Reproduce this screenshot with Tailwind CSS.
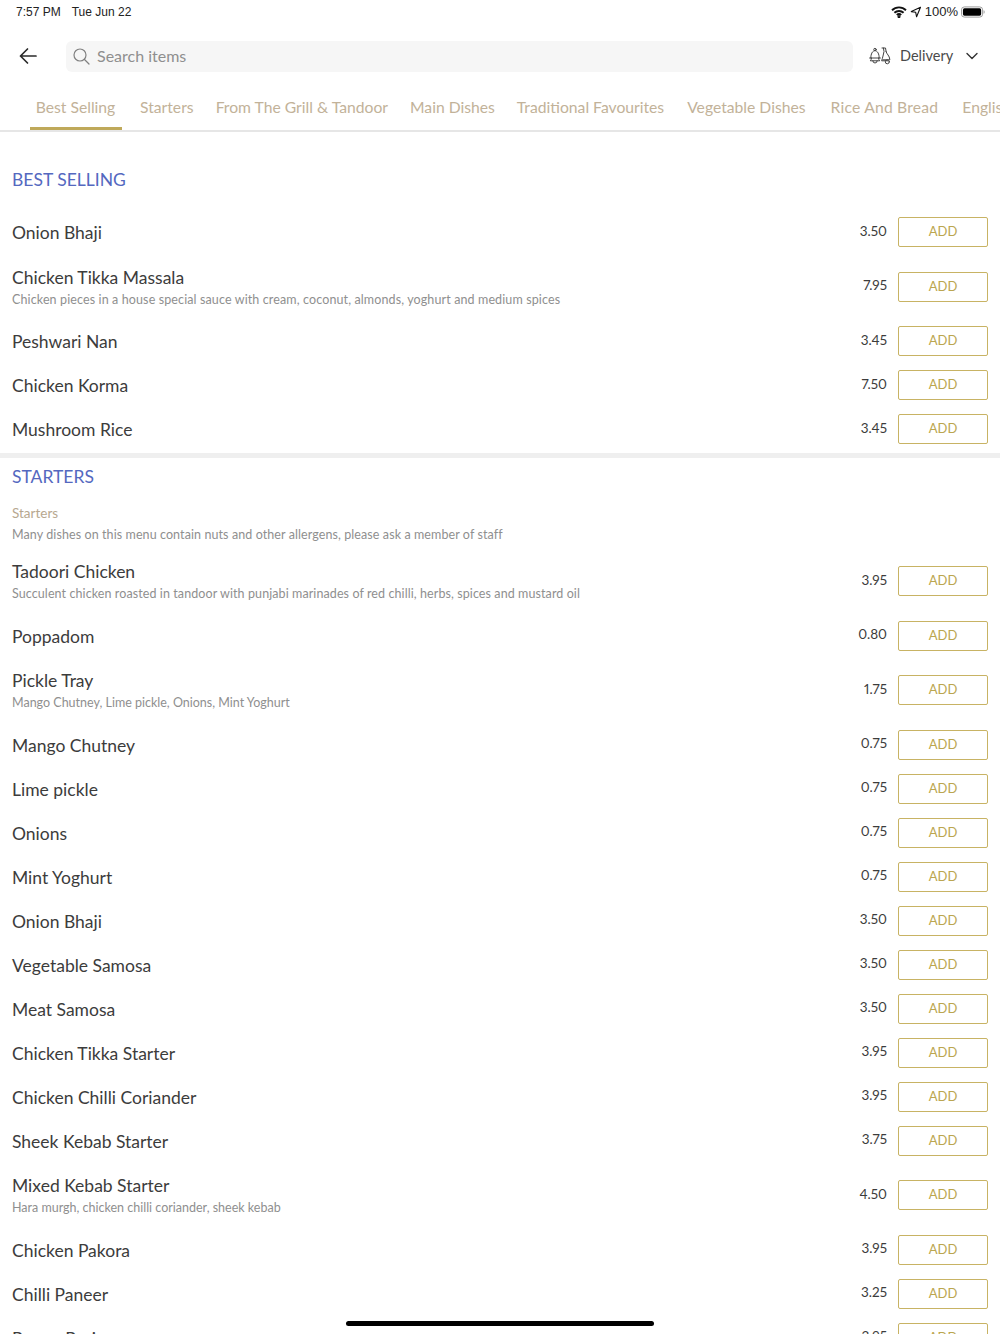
<!DOCTYPE html>
<html lang="en">
<head>
<meta charset="UTF-8" />
<meta name="viewport" content="width=device-width, initial-scale=1" />
<title>Menu</title>
<script src="https://cdn.jsdelivr.net/npm/@tailwindcss/browser@4"></script>
</head>
<body class="relative h-[1334px] overflow-hidden bg-white font-['Lato',sans-serif] text-[#3c3c3c]">

<!-- status bar -->
<div class="flex h-6 items-center justify-between pl-4 pr-[15px] font-['Liberation_Sans',sans-serif] text-[12px] text-[#222]">
  <div class="flex gap-[11px]"><span>7:57 PM</span><span>Tue Jun 22</span></div>
  <div class="flex items-center gap-[3px]">
    <svg class="h-3 w-4" viewBox="0 0 16 12" fill="none" stroke="#111" stroke-width="1.9"><path d="M1 4.200a10 10 0 0 1 14 0M3.400 6.800a6.600 6.600 0 0 1 9.200 0M5.800 9a3.200 3.200 0 0 1 4.400 0"/><circle cx="8" cy="10.600" r=".6" fill="#111"/></svg>
    <svg class="h-3 w-3" viewBox="0 0 12 12" fill="none" stroke="#111" stroke-width="1.100" stroke-linejoin="round"><path d="M10.500 1.200 1.300 5.600l4.400.7.900 4.500z"/></svg>
    <span class="text-[13px]">100%</span>
    <svg class="h-3 w-6" viewBox="0 0 25 12"><rect x=".5" y=".7" width="22" height="10.600" rx="3" fill="none" stroke="#999"/><rect x="2" y="2.200" width="19" height="7.600" rx="1.600" fill="#000"/><path d="M23.600 4.200c.8.300 1 1 1 1.800s-.2 1.500-1 1.800z" fill="#999"/></svg>
  </div>
</div>

<!-- search row -->
<div class="flex h-[64px] items-center">
  <div class="flex w-[66px] shrink-0 justify-center pr-[11px] pl-[1px]">
    <svg class="h-[18px] w-[18px]" viewBox="0 0 18 18" fill="none" stroke="#2b2b2b" stroke-width="1.700" stroke-linecap="round" stroke-linejoin="round"><path d="M17 9H1.500M8.500 2 1.500 9l7 7"/></svg>
  </div>
  <div class="flex h-[31px] w-[787px] items-center gap-[7px] rounded-md bg-[#f6f6f6] pl-[7px]">
    <svg class="h-[17px] w-[17px]" viewBox="0 0 17 17" fill="none" stroke="#808080" stroke-width="1.200" stroke-linecap="round"><circle cx="7" cy="7" r="6"/><path d="m11.500 11.500 4.500 4.500"/></svg>
    <span class="text-[16px] text-[#8f8f8f]">Search items</span>
  </div>
  <div class="ml-4 flex items-center">
    <svg class="h-[18px] w-[22px]" viewBox="0 0 22 18" fill="none" stroke="#444" stroke-width="1" stroke-linecap="round" stroke-linejoin="round"><circle cx="6" cy="2.500" r="1.200"/><path d="M1.800 11C1.800 6.800 3.500 3.700 6 3.700s4.200 3.100 4.200 7.300"/><path d="M.6 11h10.800"/><path d="M2.500 11c0 .9-.4 2-1.200 2.800h9.400c-.8-.8-1.200-1.900-1.200-2.800"/><path d="M3.800 13.800a2.200 2.200 0 0 0 4.400 0"/><path d="M13 1h3.500l.6 3.500M14.400 1l.6 3.500-1 4.500c-.5 2 -.9 3.500-1.400 4.800h6"/><path d="M17 4.500c.6 2.800 3.500 3.800 3.900 8.300h-7"/><circle cx="18.300" cy="14.800" r="2"/></svg>
    <span class="ml-[9px] text-[14.5px] text-[#4a4a4a]">Delivery</span>
    <svg class="ml-[13px] h-[8px] w-[12px]" viewBox="0 0 12 8" fill="none" stroke="#333" stroke-width="1.400" stroke-linecap="round" stroke-linejoin="round"><path d="m1 1.500 5 5 5-5"/></svg>
  </div>
</div>

<!-- category tabs -->
<div class="flex h-[44px] items-stretch overflow-hidden border-b-2 border-[#e6e6e6] pl-[30px] whitespace-nowrap text-[15.7px] text-[#c2b299]">
  <div class="flex w-[92px] shrink-0 items-center justify-center border-b-[3px] border-[#bfa95a] pr-[1px]">Best Selling</div>
  <div class="flex items-center pb-[2px] pl-[18px]">Starters</div>
  <div class="flex items-center pb-[2px] pl-[22px]">From The Grill &amp; Tandoor</div>
  <div class="flex items-center pb-[2px] pl-[22px]">Main Dishes</div>
  <div class="flex items-center pb-[2px] pl-[22px]">Traditional Favourites</div>
  <div class="flex items-center pb-[2px] pl-[23px]">Vegetable Dishes</div>
  <div class="flex items-center pb-[2px] pl-[25px] tracking-[0.2px]">Rice And Bread</div>
  <div class="flex items-center pb-[2px] pl-[24px]">English Dishes</div>
</div>

<!-- best selling -->
<h2 class="flex h-[78px] items-end pb-[22px] pl-3 text-[17.5px] leading-none text-[#5468bf]">BEST SELLING</h2>
<div class="pl-3 pr-3">
  <div class="flex h-[44px] items-center"><p class="flex-1 pt-[3px] text-[17.5px]">Onion Bhaji</p><span class="-mt-[2px] w-[60px] pr-[1px] text-right text-[13.5px] proportional-nums">3.50</span><button class="ml-[10px] h-[30px] w-[90px] rounded-[2px] border border-[#c8b364] text-[13px] text-[#bba650]">ADD</button></div>
  <div class="flex h-[65px] items-center"><div class="flex-1 pt-[2px]"><p class="text-[17.5px] leading-[24px]">Chicken Tikka Massala</p><p class="text-[12.5px] leading-[20px] tracking-[0.12px] text-[#8f8f8f]">Chicken pieces in a house special sauce with cream, coconut, almonds, yoghurt and medium spices</p></div><span class="-mt-[2px] w-[60px] pr-[1px] text-right text-[13.5px] proportional-nums">7.95</span><button class="ml-[10px] h-[30px] w-[90px] rounded-[2px] border border-[#c8b364] text-[13px] text-[#bba650]">ADD</button></div>
  <div class="flex h-[44px] items-center"><p class="flex-1 pt-[3px] text-[17.5px]">Peshwari Nan</p><span class="-mt-[2px] w-[60px] pr-[1px] text-right text-[13.5px] proportional-nums">3.45</span><button class="ml-[10px] h-[30px] w-[90px] rounded-[2px] border border-[#c8b364] text-[13px] text-[#bba650]">ADD</button></div>
  <div class="flex h-[44px] items-center"><p class="flex-1 pt-[3px] text-[17.5px]">Chicken Korma</p><span class="-mt-[2px] w-[60px] pr-[1px] text-right text-[13.5px] proportional-nums">7.50</span><button class="ml-[10px] h-[30px] w-[90px] rounded-[2px] border border-[#c8b364] text-[13px] text-[#bba650]">ADD</button></div>
  <div class="flex h-[44px] items-center"><p class="flex-1 pt-[3px] text-[17.5px]">Mushroom Rice</p><span class="-mt-[2px] w-[60px] pr-[1px] text-right text-[13.5px] proportional-nums">3.45</span><button class="ml-[10px] h-[30px] w-[90px] rounded-[2px] border border-[#c8b364] text-[13px] text-[#bba650]">ADD</button></div>
</div>

<div class="mt-[2px] h-[5px] bg-[#efefef]"></div>

<!-- starters -->
<h2 class="flex h-[38px] items-center pl-3 text-[17.5px] leading-none text-[#5468bf]">STARTERS</h2>
<div class="pl-3 pr-3">
  <div class="flex h-[52.5px] flex-col justify-center pt-1 text-[13.5px] leading-[21px]"><p class="text-[#b7a88f]">Starters</p><p class="text-[12.5px] tracking-[0.09px] text-[#8f8f8f]">Many dishes on this menu contain nuts and other allergens, please ask a member of staff</p></div>
  <div class="flex h-[65px] items-center"><div class="flex-1 pt-[2px]"><p class="text-[17.5px] leading-[24px]">Tadoori Chicken</p><p class="text-[12.5px] leading-[20px] tracking-[0.09px] text-[#8f8f8f]">Succulent chicken roasted in tandoor with punjabi marinades of red chilli, herbs, spices and mustard oil</p></div><span class="-mt-[2px] w-[60px] pr-[1px] text-right text-[13.5px] proportional-nums">3.95</span><button class="ml-[10px] h-[30px] w-[90px] rounded-[2px] border border-[#c8b364] text-[13px] text-[#bba650]">ADD</button></div>
  <div class="flex h-[44px] items-center"><p class="flex-1 pt-[3px] text-[17.5px]">Poppadom</p><span class="-mt-[2px] w-[60px] pr-[1px] text-right text-[13.5px] proportional-nums">0.80</span><button class="ml-[10px] h-[30px] w-[90px] rounded-[2px] border border-[#c8b364] text-[13px] text-[#bba650]">ADD</button></div>
  <div class="flex h-[65px] items-center"><div class="flex-1 pt-[2px]"><p class="text-[17.5px] leading-[24px]">Pickle Tray</p><p class="text-[12.5px] leading-[20px] text-[#8f8f8f]">Mango Chutney, Lime pickle, Onions, Mint Yoghurt</p></div><span class="-mt-[2px] w-[60px] pr-[1px] text-right text-[13.5px] proportional-nums">1.75</span><button class="ml-[10px] h-[30px] w-[90px] rounded-[2px] border border-[#c8b364] text-[13px] text-[#bba650]">ADD</button></div>
  <div class="flex h-[44px] items-center"><p class="flex-1 pt-[3px] text-[17.5px]">Mango Chutney</p><span class="-mt-[2px] w-[60px] pr-[1px] text-right text-[13.5px] proportional-nums">0.75</span><button class="ml-[10px] h-[30px] w-[90px] rounded-[2px] border border-[#c8b364] text-[13px] text-[#bba650]">ADD</button></div>
  <div class="flex h-[44px] items-center"><p class="flex-1 pt-[3px] text-[17.5px]">Lime pickle</p><span class="-mt-[2px] w-[60px] pr-[1px] text-right text-[13.5px] proportional-nums">0.75</span><button class="ml-[10px] h-[30px] w-[90px] rounded-[2px] border border-[#c8b364] text-[13px] text-[#bba650]">ADD</button></div>
  <div class="flex h-[44px] items-center"><p class="flex-1 pt-[3px] text-[17.5px]">Onions</p><span class="-mt-[2px] w-[60px] pr-[1px] text-right text-[13.5px] proportional-nums">0.75</span><button class="ml-[10px] h-[30px] w-[90px] rounded-[2px] border border-[#c8b364] text-[13px] text-[#bba650]">ADD</button></div>
  <div class="flex h-[44px] items-center"><p class="flex-1 pt-[3px] text-[17.5px]">Mint Yoghurt</p><span class="-mt-[2px] w-[60px] pr-[1px] text-right text-[13.5px] proportional-nums">0.75</span><button class="ml-[10px] h-[30px] w-[90px] rounded-[2px] border border-[#c8b364] text-[13px] text-[#bba650]">ADD</button></div>
  <div class="flex h-[44px] items-center"><p class="flex-1 pt-[3px] text-[17.5px]">Onion Bhaji</p><span class="-mt-[2px] w-[60px] pr-[1px] text-right text-[13.5px] proportional-nums">3.50</span><button class="ml-[10px] h-[30px] w-[90px] rounded-[2px] border border-[#c8b364] text-[13px] text-[#bba650]">ADD</button></div>
  <div class="flex h-[44px] items-center"><p class="flex-1 pt-[3px] text-[17.5px]">Vegetable Samosa</p><span class="-mt-[2px] w-[60px] pr-[1px] text-right text-[13.5px] proportional-nums">3.50</span><button class="ml-[10px] h-[30px] w-[90px] rounded-[2px] border border-[#c8b364] text-[13px] text-[#bba650]">ADD</button></div>
  <div class="flex h-[44px] items-center"><p class="flex-1 pt-[3px] text-[17.5px]">Meat Samosa</p><span class="-mt-[2px] w-[60px] pr-[1px] text-right text-[13.5px] proportional-nums">3.50</span><button class="ml-[10px] h-[30px] w-[90px] rounded-[2px] border border-[#c8b364] text-[13px] text-[#bba650]">ADD</button></div>
  <div class="flex h-[44px] items-center"><p class="flex-1 pt-[3px] text-[17.5px]">Chicken Tikka Starter</p><span class="-mt-[2px] w-[60px] pr-[1px] text-right text-[13.5px] proportional-nums">3.95</span><button class="ml-[10px] h-[30px] w-[90px] rounded-[2px] border border-[#c8b364] text-[13px] text-[#bba650]">ADD</button></div>
  <div class="flex h-[44px] items-center"><p class="flex-1 pt-[3px] text-[17.5px]">Chicken Chilli Coriander</p><span class="-mt-[2px] w-[60px] pr-[1px] text-right text-[13.5px] proportional-nums">3.95</span><button class="ml-[10px] h-[30px] w-[90px] rounded-[2px] border border-[#c8b364] text-[13px] text-[#bba650]">ADD</button></div>
  <div class="flex h-[44px] items-center"><p class="flex-1 pt-[3px] text-[17.5px]">Sheek Kebab Starter</p><span class="-mt-[2px] w-[60px] pr-[1px] text-right text-[13.5px] proportional-nums">3.75</span><button class="ml-[10px] h-[30px] w-[90px] rounded-[2px] border border-[#c8b364] text-[13px] text-[#bba650]">ADD</button></div>
  <div class="flex h-[65px] items-center"><div class="flex-1 pt-[2px]"><p class="text-[17.5px] leading-[24px]">Mixed Kebab Starter</p><p class="text-[12.5px] leading-[20px] text-[#8f8f8f]">Hara murgh, chicken chilli coriander, sheek kebab</p></div><span class="-mt-[2px] w-[60px] pr-[1px] text-right text-[13.5px] proportional-nums">4.50</span><button class="ml-[10px] h-[30px] w-[90px] rounded-[2px] border border-[#c8b364] text-[13px] text-[#bba650]">ADD</button></div>
  <div class="flex h-[44px] items-center"><p class="flex-1 pt-[3px] text-[17.5px]">Chicken Pakora</p><span class="-mt-[2px] w-[60px] pr-[1px] text-right text-[13.5px] proportional-nums">3.95</span><button class="ml-[10px] h-[30px] w-[90px] rounded-[2px] border border-[#c8b364] text-[13px] text-[#bba650]">ADD</button></div>
  <div class="flex h-[44px] items-center"><p class="flex-1 pt-[3px] text-[17.5px]">Chilli Paneer</p><span class="-mt-[2px] w-[60px] pr-[1px] text-right text-[13.5px] proportional-nums">3.25</span><button class="ml-[10px] h-[30px] w-[90px] rounded-[2px] border border-[#c8b364] text-[13px] text-[#bba650]">ADD</button></div>
  <div class="flex h-[44px] items-center"><p class="flex-1 pt-[3px] text-[17.5px]">Prawn Puri</p><span class="-mt-[2px] w-[60px] pr-[1px] text-right text-[13.5px] proportional-nums">3.95</span><button class="ml-[10px] h-[30px] w-[90px] rounded-[2px] border border-[#c8b364] text-[13px] text-[#bba650]">ADD</button></div>
</div>

<!-- home indicator -->
<div class="absolute bottom-[8px] left-[346px] h-[5px] w-[308px] rounded-full bg-black"></div>
</body>
</html>
